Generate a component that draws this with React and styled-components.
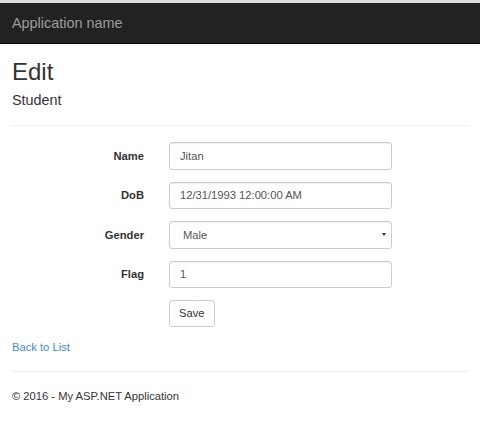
import React from 'react';
import styled, { createGlobalStyle } from 'styled-components';

const GlobalStyle = createGlobalStyle`
  * {
    box-sizing: border-box;
  }
  body {
    margin: 0;
    background: #fff;
    color: #333;
    font-family: "Liberation Sans", Arial, sans-serif;
    font-size: 11.2px;
    line-height: 1.42857;
  }
`;

const TopStrip = styled.div`
  height: 3px;
  background: #dcdcdc;
`;

const Navbar = styled.nav`
  height: 41px;
  background: #222;
  border-bottom: 1px solid #080808;
  display: flex;
  align-items: center;
  padding: 0 12px;
`;

const Brand = styled.a`
  color: #9d9d9d;
  font-size: 14.4px;
  text-decoration: none;
  line-height: 1;
`;

const Container = styled.div`
  padding: 0 12px;
`;

const Title = styled.h2`
  font-size: 24px;
  font-weight: 500;
  line-height: 1.1;
  margin: 15px 0 8px;
`;

const Subtitle = styled.h4`
  font-size: 14.4px;
  font-weight: 500;
  line-height: 1.1;
  margin: 8px 0 8px;
`;

const Rule = styled.hr`
  border: 0;
  border-top: 1px solid #eee;
  margin: 16px 0;
`;

const Form = styled.form`
  display: flex;
  flex-direction: column;
  gap: 12px;
  margin-bottom: 12px;
`;

const FormRow = styled.div`
  display: grid;
  grid-template-columns: 132px 223px;
  column-gap: 25px;
  align-items: center;
`;

const Label = styled.label`
  text-align: right;
  font-weight: bold;
  color: #333;
`;

const fieldBase = `
  width: 223px;
  height: 27.5px;
  padding: 0 10px;
  font-family: "Liberation Sans", Arial, sans-serif;
  font-size: 11.2px;
  color: #555;
  background: #fff;
  border: 1px solid #ccc;
  border-radius: 3px;
  box-shadow: inset 0 1px 1px rgba(0, 0, 0, 0.075);
  outline: none;
`;

const Input = styled.input`
  ${fieldBase}
`;

const SelectWrap = styled.div`
  position: relative;
  width: 223px;

  &::after {
    content: '';
    position: absolute;
    right: 6px;
    top: 12px;
    border-left: 2.5px solid transparent;
    border-right: 2.5px solid transparent;
    border-top: 3.5px solid #333;
    pointer-events: none;
  }
`;

const Select = styled.select`
  ${fieldBase}
  padding-left: 13px;
  appearance: none;
  -webkit-appearance: none;
`;

const Button = styled.button`
  grid-column: 2;
  justify-self: start;
  height: 26.5px;
  padding: 0 9px;
  font-family: "Liberation Sans", Arial, sans-serif;
  font-size: 11.2px;
  color: #333;
  background: #fff;
  border: 1px solid #ccc;
  border-radius: 3px;
`;

const Link = styled.a`
  display: block;
  color: #428bca;
  text-decoration: none;
  margin: 0 0 8px;
`;

const Footer = styled.footer`
  p {
    margin: 0 0 8px;
  }
`;

export default function App() {
  return (
    <>
      <GlobalStyle />
      <TopStrip />
      <Navbar>
        <Brand href="#">Application name</Brand>
      </Navbar>
      <Container>
        <Title>Edit</Title>
        <Subtitle>Student</Subtitle>
        <Rule />
        <Form onSubmit={(e) => e.preventDefault()}>
          <FormRow>
            <Label>Name</Label>
            <Input defaultValue="Jitan" />
          </FormRow>
          <FormRow>
            <Label>DoB</Label>
            <Input defaultValue="12/31/1993 12:00:00 AM" />
          </FormRow>
          <FormRow>
            <Label>Gender</Label>
            <SelectWrap>
              <Select defaultValue="Male">
                <option>Male</option>
                <option>Female</option>
              </Select>
            </SelectWrap>
          </FormRow>
          <FormRow>
            <Label>Flag</Label>
            <Input defaultValue="1" />
          </FormRow>
          <FormRow>
            <Button type="submit">Save</Button>
          </FormRow>
        </Form>
        <Link href="#">Back to List</Link>
        <Rule />
        <Footer>
          <p>© 2016 - My ASP.NET Application</p>
        </Footer>
      </Container>
    </>
  );
}
